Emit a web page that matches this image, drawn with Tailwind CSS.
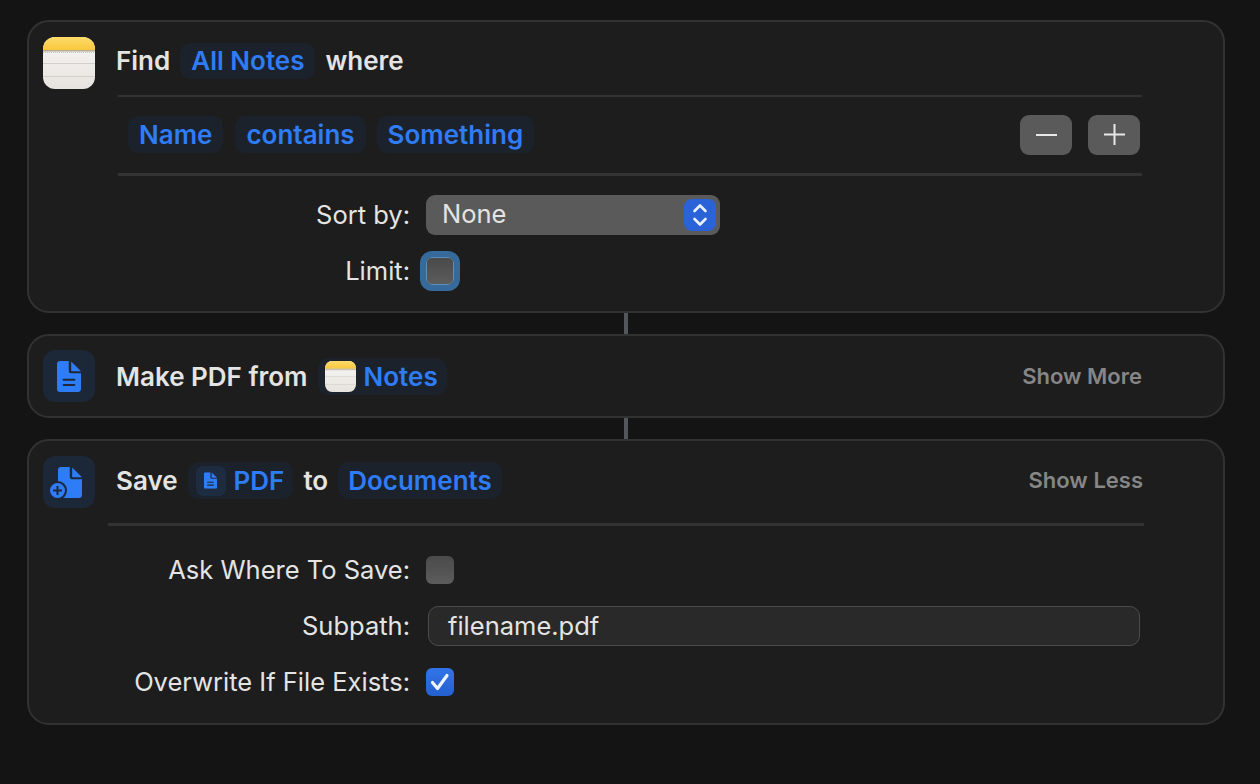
<!DOCTYPE html>
<html lang="en">
<head>
    <meta charset="UTF-8">
    <title>Shortcut actions</title>
    <script src="https://cdn.jsdelivr.net/npm/@tailwindcss/browser@4"></script>
</head>
<body class="bg-[#141414] h-[784px] overflow-hidden font-['Inter','Liberation_Sans',sans-serif] text-[#e4e4e4]">
    <svg class="absolute w-0 h-0">
        <defs>
            <linearGradient id="paper" x1="0" y1="0" x2="0" y2="1">
                <stop offset="0" stop-color="#f8f7f5"/>
                <stop offset="1" stop-color="#e6e3dd"/>
            </linearGradient>
            <linearGradient id="yellow" x1="0" y1="0" x2="0" y2="1">
                <stop offset="0" stop-color="#fddc6b"/>
                <stop offset="1" stop-color="#f9c73d"/>
            </linearGradient>
            <clipPath id="noteclip"><rect width="52" height="52" rx="12"/></clipPath>
            <symbol id="notes" viewBox="0 0 52 52">
                <g clip-path="url(#noteclip)">
                    <rect width="52" height="52" fill="url(#paper)"/>
                    <rect width="52" height="13" fill="url(#yellow)"/>
                    <rect y="13" width="52" height="1.500" fill="#b3ab94"/>
                    <line x1="0" y1="15.500" x2="52" y2="15.500" stroke="#c9c6c0" stroke-width="1" stroke-dasharray="1 1"/>
                    <rect y="26" width="52" height="1" fill="#d3d0cc"/>
                    <rect y="39" width="52" height="1" fill="#d3d0cc"/>
                </g>
            </symbol>
            <symbol id="blank" viewBox="0 0 24.500 31.500">
                <path fill="#2e7cf6" d="M3 0H12V9.500C12 11.400 13.100 12.500 15 12.500H24.500V28.500C24.500 30.500 23.200 31.500 21.500 31.500H3C1.200 31.500 0 30.300 0 28.500V3C0 1.200 1.200 0 3 0Z"/>
                <path fill="#2e7cf6" d="M14.500 0.500L24.500 10.500H15.500C14.800 10.500 14.500 10.200 14.500 9.500Z"/>
            </symbol>
            <symbol id="doc" viewBox="0 0 24.500 31.500">
                <use href="#blank" width="24.500" height="31.500"/>
                <rect x="6" y="18" width="12.500" height="2" rx="0.500" fill="#1c2738"/>
                <rect x="6" y="23.500" width="12.500" height="2" rx="0.500" fill="#1c2738"/>
            </symbol>
        </defs>
    </svg>

    <div class="flex flex-col pt-[20px] pl-[27px] pr-[35px]">
        <!-- find notes -->
        <div class="h-[293px] rounded-[22px] border-2 border-[#323232] bg-[#1d1d1d] pl-[14px] pt-[15px] flex">
            <svg class="w-[52px] h-[52px] shrink-0"><use href="#notes"/></svg>
            <div class="ml-[21px] w-[1026px]">
                <div class="flex items-center h-[36px] mt-[6px] text-[26px] leading-[36px] font-semibold">
                    <span>Find</span>
                    <span class="ml-[10px] h-[36px] rounded-[10px] bg-[#1c222b] px-[11px] text-[#2e7cf6]">All Notes</span>
                    <span class="ml-[10px]">where</span>
                </div>
                <div class="mt-[16px] ml-[2px] h-[2px] bg-[#333333]"></div>
                <div class="flex items-center mt-[19px] ml-[12px] h-[37px] text-[26px] font-semibold text-[#2e7cf6]">
                    <span class="h-[37px] leading-[37px] rounded-[10px] bg-[#1c222b] px-[11px]">Name</span>
                    <span class="ml-[12px] h-[37px] leading-[37px] rounded-[10px] bg-[#1c222b] px-[11px]">contains</span>
                    <span class="ml-[11px] h-[37px] leading-[37px] rounded-[10px] bg-[#1c222b] px-[11px]">Something</span>
                    <div class="ml-auto mr-[2px] flex gap-[16px]">
                        <div class="w-[52px] h-[40px] rounded-[9px] bg-[#5a5a5a] flex items-center justify-center">
                            <div class="w-[21px] h-[2px] bg-[#e8e8e8]"></div>
                        </div>
                        <div class="w-[52px] h-[40px] rounded-[9px] bg-[#5a5a5a] flex items-center justify-center">
                            <svg class="w-[21px] h-[21px]" viewBox="0 0 21 21"><path d="M0 10.500H21M10.500 0V21" stroke="#e8e8e8" stroke-width="2"/></svg>
                        </div>
                    </div>
                </div>
                <div class="mt-[20px] ml-[2px] h-[3px] bg-[#333333]"></div>
                <div class="mt-[19px] grid grid-cols-[294px_auto] gap-x-[16px] gap-y-[22px] items-center justify-start text-[25.5px]">
                    <span class="text-right leading-[40px]">Sort by:</span>
                    <div class="w-[294px] h-[40px] rounded-[9px] bg-[#5a5a5a] flex items-center pl-[16px] pr-[4px]">
                        <span class="flex-1 -mt-[2px]">None</span>
                        <div class="w-[32px] h-[32px] rounded-[8px] bg-[#2a63d8] flex items-center justify-center">
                            <svg class="w-[16px] h-[24px]" viewBox="0 0 16 24" fill="none" stroke="#eaf0ff" stroke-width="2.600" stroke-linecap="round" stroke-linejoin="round"><path d="M2.500 8L8 2.500L13.500 8"/><path d="M2.500 16L8 21.500L13.500 16"/></svg>
                        </div>
                    </div>
                    <span class="text-right leading-[28px]">Limit:</span>
                    <div class="w-[28px] h-[28px] rounded-[6px] bg-gradient-to-b from-[#4a4a4a] to-[#5c5c5c] border border-[#5d8db8] ring-[6px] ring-[#356a9a]"></div>
                </div>
            </div>
        </div>

        <div class="self-center w-[4px] h-[21px] bg-[#55565c]"></div>

        <!-- make pdf -->
        <div class="h-[84px] rounded-[22px] border-2 border-[#323232] bg-[#1d1d1d] pl-[14px] flex items-center">
            <div class="w-[52px] h-[52px] rounded-[12px] bg-[#1c2738] flex items-center justify-center">
                <svg class="w-[24px] h-[31px]"><use href="#doc"/></svg>
            </div>
            <span class="ml-[21px] text-[26px] font-semibold">Make PDF from</span>
            <div class="ml-[10px] h-[37px] rounded-[10px] bg-[#1c222b] flex items-center pl-[7px] pr-[9px] text-[26px] font-semibold text-[#2e7cf6]">
                <svg class="w-[31px] h-[31px]"><use href="#notes"/></svg>
                <span class="ml-[8px]">Notes</span>
            </div>
            <span class="ml-auto mr-[81px] text-[22px] font-semibold text-[#868686]">Show More</span>
        </div>

        <div class="self-center w-[4px] h-[21px] bg-[#55565c]"></div>

        <!-- save file -->
        <div class="h-[286px] rounded-[22px] border-2 border-[#323232] bg-[#1d1d1d] pl-[14px] pt-[15px] flex">
            <div class="w-[52px] h-[52px] shrink-0 rounded-[12px] bg-[#1c2738] relative flex items-center justify-center">
                <svg class="w-[24px] h-[31px] ml-[2px]"><use href="#blank"/></svg>
                <svg class="absolute left-[5px] bottom-[8px] w-[19px] h-[19px]" viewBox="0 0 19 19"><circle cx="9.500" cy="9.500" r="8.500" fill="#2e7cf6" stroke="#1c2738" stroke-width="2"/><path d="M9.500 5V14M5 9.500H14" stroke="#1c2738" stroke-width="2"/></svg>
            </div>
            <div class="w-[1036px] ml-[13px]">
                <div class="flex items-center h-[37px] mt-[6px] ml-[8px] text-[26px] font-semibold">
                    <span>Save</span>
                    <div class="ml-[10px] h-[37px] rounded-[10px] bg-[#1c222b] flex items-center pl-[8px] pr-[9px] text-[#2e7cf6]">
                        <div class="w-[30px] h-[30px] rounded-[7px] bg-[#1e2c42] flex items-center justify-center">
                            <svg class="w-[13px] h-[17px]"><use href="#doc"/></svg>
                        </div>
                        <span class="ml-[8px]">PDF</span>
                    </div>
                    <span class="ml-[10px]">to</span>
                    <span class="ml-[10px] h-[37px] leading-[37px] rounded-[10px] bg-[#1c222b] px-[10px] text-[#2e7cf6]">Documents</span>
                    <span class="ml-auto mr-[1px] text-[22px] font-semibold text-[#868686]">Show Less</span>
                </div>
                <div class="mt-[24px] h-[3px] bg-[#333333]"></div>
                <div class="mt-[30px] grid grid-cols-[302px_auto] gap-x-[16px] gap-y-[22px] items-center justify-start text-[25.5px]">
                    <span class="text-right leading-[28px] whitespace-nowrap">Ask Where To Save:</span>
                    <div class="w-[28px] h-[28px] rounded-[6px] bg-gradient-to-b from-[#4a4a4a] to-[#5c5c5c]"></div>
                    <span class="text-right leading-[40px] whitespace-nowrap">Subpath:</span>
                    <div class="ml-[2px] w-[712px] h-[40px] rounded-[10px] border border-[#4c4c4c] bg-[#292929] pl-[19px] leading-[38px]">filename.pdf</div>
                    <span class="text-right leading-[28px] whitespace-nowrap">Overwrite If File Exists:</span>
                    <div class="w-[28px] h-[28px] rounded-[6px] bg-gradient-to-b from-[#3274e8] to-[#2460d0] flex items-center justify-center">
                        <svg class="w-[20px] h-[20px]" viewBox="0 0 20 20" fill="none" stroke="#eef3ff" stroke-width="3.200" stroke-linecap="round" stroke-linejoin="round"><path d="M2.500 10.500L7.500 16.500L17 3.500"/></svg>
                    </div>
                </div>
            </div>
        </div>
    </div>
</body>
</html>
